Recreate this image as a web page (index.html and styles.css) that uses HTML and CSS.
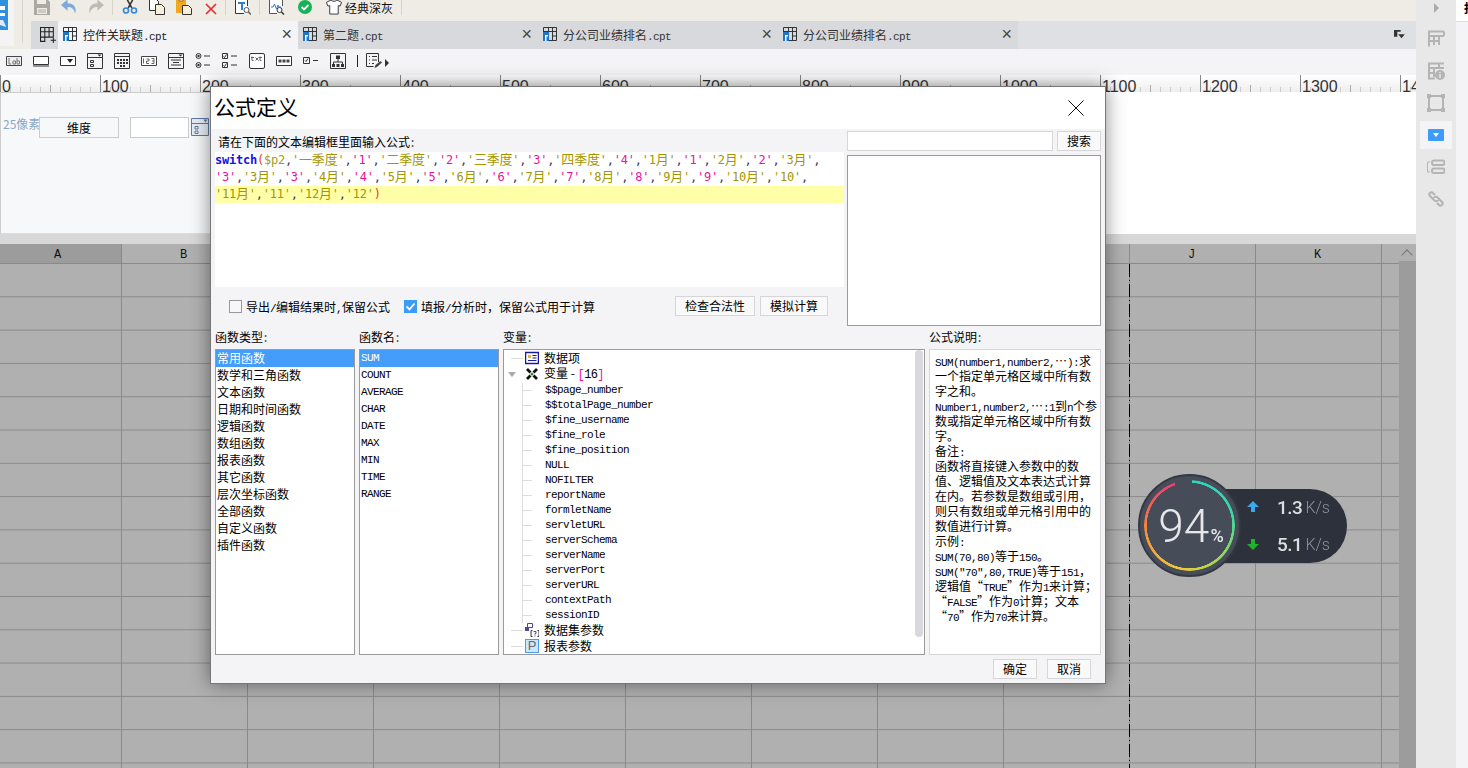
FILE: index.html
```html
<!DOCTYPE html>
<html lang="zh-CN">
  <head>
    <meta charset="UTF-8" />
    <title>公式定义</title>
    <link rel="stylesheet" href="styles.css">
  </head>
  <body>
    <svg class="sprite" xmlns="http://www.w3.org/2000/svg">
      <symbol id="i-file" viewBox="0 0 14 14"><path d="M.5.5h13v13H.5zM.5 4.500h13M5.500.5v13M9.500.5v13M9.500 9h4" fill="none" stroke="#333"/><path d="M0 5h6v9H0z" fill="#1b75c4"/><path d="M2 8h3v1.500H3.500V14H2z" fill="#fff"/></symbol>
      <symbol id="i-newtab" viewBox="0 0 15 15"><path d="M.5.5h12v9H.5zM.5 4.500h12M4.500.5v13H.5V9.500M8.500.5v9" fill="none" stroke="#222"/><path d="M10 12.500h5M12.500 10v5" stroke="#222"/></symbol>
      <symbol id="i-lab" viewBox="0 0 16 16"><path d="M.5 3.500h15v9H.5z" fill="#eee" stroke="#444"/><path d="M3 5v6h2M7 11V8h2.500v3zM11 5v6h2.500V8H11" fill="none" stroke="#777"/></symbol>
      <symbol id="i-input" viewBox="0 0 16 16"><path d="M.5 3.500h15v8H.5z" fill="#fff" stroke="#333"/><path d="M0 13h16" stroke="#333"/></symbol>
      <symbol id="i-select" viewBox="0 0 16 16"><path d="M.5 3.500h15v9H.5z" fill="#fff" stroke="#333"/><path d="M7 6h6l-3 4z" fill="#222"/></symbol>
      <symbol id="i-form" viewBox="0 0 16 16"><path d="M.5.5h15v15H.5zM.5 4.500h15M3.500 7.500h3v2h-3zM3.500 11.500h3v2h-3z" fill="none" stroke="#333"/><path d="M10.500 1.500h4l-2 2z" fill="#333"/></symbol>
      <symbol id="i-cal" viewBox="0 0 16 16"><path d="M.5.5h15v15H.5zM.5 3.500h15" fill="none" stroke="#333"/><path d="M3 6h2v2H3zM6 6h2v2H6zM9 6h2v2H9zM12 6h2v2h-2zM3 9h2v2H3zM6 9h2v2H6zM9 9h2v2H9zM12 9h2v2h-2zM6 12h2v2H6zM9 12h2v2H9z" fill="#333"/></symbol>
      <symbol id="i-num" viewBox="0 0 16 16"><path d="M.5 3.500h15v9H.5z" fill="#fff" stroke="#444"/><path d="M2.500 5.500v5M5.500 6h2.500v2H5.500v2.500H8M10.500 5.500H13v2.500h-2M13 8v2.500h-2.500" fill="none" stroke="#666"/></symbol>
      <symbol id="i-para" viewBox="0 0 16 16"><path d="M.5.5h15v15H.5zM.5 4.500h15M3 7h10M5 9.500h6M3 12h10" fill="none" stroke="#333"/><path d="M10.500 1.500h4l-2 2z" fill="#333"/></symbol>
      <symbol id="i-radios" viewBox="0 0 16 16"><g fill="none" stroke="#333"><circle cx="3.500" cy="3" r="2.500"/><circle cx="3.500" cy="12" r="2.500"/><path d="M9 3h6M9 12h6"/></g><circle cx="3.500" cy="3" r="1.200" fill="#333"/><circle cx="3.500" cy="12" r="1.200" fill="#333"/></symbol>
      <symbol id="i-checks" viewBox="0 0 16 16"><path d="M.5.500h5v5h-5zM.5 9.500h5v5h-5zM9 3h6M9 12h6M1.500 3.500l1 1 2-3M1.500 12.500l1 1 2-3" fill="none" stroke="#333"/></symbol>
      <symbol id="i-text" viewBox="0 0 16 16"><rect x=".5" y=".5" width="15" height="15" rx="1.500" fill="#fff" stroke="#333"/><path d="M3 3.500v4h1.500M2 4.500h3M6.500 4.500l3 3M9.500 4.500l-3 3M11 3.500v4h1.500M10 4.500h3" fill="none" stroke="#666"/></symbol>
      <symbol id="i-pass" viewBox="0 0 16 16"><path d="M.5 3.500h15v9H.5z" fill="#fff" stroke="#333"/><path d="M2.500 6.500h3v3h-3zM6.500 6.500h3v3h-3zM10.500 6.500h3v3h-3z" fill="#444"/></symbol>
      <symbol id="i-check" viewBox="0 0 16 16"><path d="M.5 4.500h6v6h-6zM10 7.500h5M2 7.500l1 1 2-3" fill="none" stroke="#333"/></symbol>
      <symbol id="i-tree" viewBox="0 0 16 16"><path d="M.5.5h15v15H.5zM8 6v3M3.500 11V9h9v2" fill="none" stroke="#333"/><path d="M6 2.500h4v3.500H6zM2 11h3v3H2zM6.500 11h3v3h-3zM11 11h3v3h-3z" fill="#333"/></symbol>
      <symbol id="i-listedit" viewBox="0 0 16 16"><path d="M12.500 9V.5H.5v13h7M3 3.500h1M6 3.500h5M3 7h1M6 7h5M3 10.500h1M6 10.500h2" fill="none" stroke="#333"/><path d="M8.500 15l1-3 5-4 1.500 1.500-5 4.500z" fill="#444"/></symbol>
      <symbol id="i-widget" viewBox="0 0 18 18"><path d="M.5.5h17v17H.5zM.5 5.500h17M4 8.500h3v2.500H4zM4 13h3v2.500H4z" fill="#e8edf5" stroke="#5f7aa8"/><path d="M12.500 1.500h4l-2 3z" fill="#5f7aa8"/></symbol>
      <symbol id="i-save" viewBox="0 0 16 16"><path d="M0 0h13l3 3v13H0z" fill="#aaa9a4"/><path d="M3-1h9v6H3z" fill="#efece5"/><path d="M3 9h10v6H3z" fill="#efece5"/><path d="M4 11h8M4 13h8" stroke="#aaa9a4"/></symbol>
      <symbol id="i-undo" viewBox="0 0 17 16"><path d="M7 0L0 6l7 6V8c4 0 7 2 8 7 2-6-1-11-8-11z" fill="#7da9dc"/></symbol>
      <symbol id="i-redo" viewBox="0 0 17 16"><path d="M10 0l7 6-7 6V8c-4 0-7 2-8 7C0 9 3 4 10 4z" fill="#bdbcb8"/></symbol>
      <symbol id="i-cut" viewBox="0 0 18 16"><path d="M7 9L12 0M11 9L6 0" stroke="#333" stroke-width="1.800" fill="none"/><circle cx="4.500" cy="12" r="2.800" fill="none" stroke="#3484d8" stroke-width="1.800"/><circle cx="13.500" cy="12" r="2.800" fill="none" stroke="#3484d8" stroke-width="1.800"/></symbol>
      <symbol id="i-copy" viewBox="0 0 16 16"><path d="M.5.5h7l2 2v9h-9z" fill="#fff" stroke="#333"/><path d="M6.500 5.500h6l3 3v7h-9z" fill="#f7efd8" stroke="#333"/></symbol>
      <symbol id="i-paste" viewBox="0 0 16 16"><path d="M0 0h10v14H0z" fill="#f0a820"/><path d="M3-1h4v3H3z" fill="#fff" stroke="#a06a10"/><path d="M6.500 6.500h6l3 3v6h-9z" fill="#f7efd8" stroke="#333"/></symbol>
      <symbol id="i-del" viewBox="0 0 12 12"><path d="M1 1l10 10M11 1L1 11" stroke="#e62e2e" stroke-width="1.700"/></symbol>
      <symbol id="i-tfind" viewBox="0 0 16 16"><path d="M9 14.500H.5V.5h12V7" fill="#fff" stroke="#333"/><path d="M3 3h7v2H8v6H6V5H3z" fill="#2e7fd0"/><circle cx="11.500" cy="11" r="2.500" fill="#fff" stroke="#555"/><path d="M13.500 13l2.500 2.500" stroke="#555" stroke-width="1.500"/></symbol>
      <symbol id="i-chart" viewBox="0 0 16 16"><path d="M8 14.500H.5V.5h13V7" fill="#fff" stroke="#555"/><path d="M2 8h2l1.500-3 2 5 1.500-4 1 2h2" fill="none" stroke="#3a7fc8"/><circle cx="10.500" cy="11" r="2.500" fill="#fff" stroke="#333"/><path d="M12.500 13l2.500 2.500" stroke="#333" stroke-width="1.500"/></symbol>
      <symbol id="i-ok" viewBox="0 0 14 14"><circle cx="7" cy="7" r="7" fill="#14b355"/><path d="M3.500 7l2.500 2.500 4.500-4.500" fill="none" stroke="#fff" stroke-width="1.800"/></symbol>
      <symbol id="i-shirt" viewBox="0 0 17 16"><path d="M5.500.5L.5 3l1.500 4 2-.5v9h9v-9l2 .5 1.500-4-5-2.500c-.5 2-5.500 2-6 0z" fill="#fff" stroke="#333"/></symbol>
      <symbol id="i-more" viewBox="0 0 14 12"><path d="M1 0h8v2H5v6H1z" fill="#333"/><path d="M6 5h8l-4 5z" fill="#333"/></symbol>
    </svg>

    <div class="app">
      <div class="main">
        <div class="top">
          <div class="logo-col">
            <div class="logo">
              <svg class="logo-mark" viewBox="0 0 8 30"><path d="M0 0h8v30H0z" fill="#2f8fe0"/><path d="M0 6h5v4H0zM0 13h5v3H0z" fill="#fff"/><path d="M0 20h3l2 4 1 3-3-1-3-1z" fill="#dfeaf5"/></svg>
            </div>
            <div class="logo-sep"></div>
          </div>
          <div class="top-right">
            <div class="toolbar">
              <svg class="ico"><use href="#i-save"/></svg>
              <svg class="ico"><use href="#i-undo"/></svg>
              <svg class="ico"><use href="#i-redo"/></svg>
              <span class="tb-sep"></span>
              <svg class="ico"><use href="#i-cut"/></svg>
              <svg class="ico"><use href="#i-copy"/></svg>
              <svg class="ico"><use href="#i-paste"/></svg>
              <svg class="ico ico-small"><use href="#i-del"/></svg>
              <span class="tb-sep"></span>
              <svg class="ico"><use href="#i-tfind"/></svg>
              <span class="tb-sep"></span>
              <svg class="ico"><use href="#i-chart"/></svg>
              <svg class="ico ico-ok"><use href="#i-ok"/></svg>
              <span class="theme"><svg class="ico"><use href="#i-shirt"/></svg>经典深灰</span>
              <span class="tb-sep"></span>
            </div>
            <div class="tabs">
              <div class="tab-new"><svg class="ico"><use href="#i-newtab"/></svg></div>
              <div class="tab active"><svg class="tab-ico"><use href="#i-file"/></svg><span class="tab-name">控件关联题<span class="lat">.cpt</span></span><span class="tab-x">×</span></div>
              <div class="tab"><svg class="tab-ico"><use href="#i-file"/></svg><span class="tab-name">第二题<span class="lat">.cpt</span></span><span class="tab-x">×</span></div>
              <div class="tab"><svg class="tab-ico"><use href="#i-file"/></svg><span class="tab-name">分公司业绩排名<span class="lat">.cpt</span></span><span class="tab-x">×</span></div>
              <div class="tab"><svg class="tab-ico"><use href="#i-file"/></svg><span class="tab-name">分公司业绩排名<span class="lat">.cpt</span></span><span class="tab-x">×</span></div>
              <svg class="tabs-more"><use href="#i-more"/></svg>
            </div>
          </div>
        </div>

        <div class="widgetbar">
          <svg class="ico"><use href="#i-lab"/></svg>
          <svg class="ico"><use href="#i-input"/></svg>
          <svg class="ico"><use href="#i-select"/></svg>
          <svg class="ico"><use href="#i-form"/></svg>
          <svg class="ico"><use href="#i-cal"/></svg>
          <svg class="ico"><use href="#i-num"/></svg>
          <svg class="ico"><use href="#i-para"/></svg>
          <svg class="ico"><use href="#i-radios"/></svg>
          <svg class="ico"><use href="#i-checks"/></svg>
          <svg class="ico"><use href="#i-text"/></svg>
          <svg class="ico"><use href="#i-pass"/></svg>
          <svg class="ico"><use href="#i-check"/></svg>
          <svg class="ico"><use href="#i-tree"/></svg>
          <span class="wb-sep"></span>
          <svg class="ico"><use href="#i-listedit"/></svg>
          <span class="wb-arrow"></span>
        </div>

        <div class="ruler">
          <span>0</span><span>100</span><span>200</span><span>300</span><span>400</span><span>500</span><span>600</span><span>700</span><span>800</span><span>900</span><span>1000</span><span>1100</span><span>1200</span><span>1300</span><span>1400</span>
        </div>

        <div class="canvas">
          <div class="param-panel">
            <span class="px-label">25像素</span>
            <span class="param-btn">维度</span>
            <span class="param-input"></span>
            <svg class="param-ico"><use href="#i-widget"/></svg>
          </div>
        </div>
        <div class="split"></div>

        <div class="sheet">
          <div class="grid">
            <div class="col-heads">
              <div class="col-head selected">A</div>
              <div class="col-head">B</div>
              <div class="col-head">C</div>
              <div class="col-head">D</div>
              <div class="col-head">E</div>
              <div class="col-head">F</div>
              <div class="col-head">G</div>
              <div class="col-head">H</div>
              <div class="col-head">I</div>
              <div class="col-head">J</div>
              <div class="col-head">K</div>
            </div>
            <div class="cells"><div class="page-break"></div></div>
          </div>
          <div class="vscroll"><div class="vscroll-up"></div></div>
        </div>
      </div>

      <div class="sidebar">
        <span class="side-arrow"></span>
        <svg class="side-ico" viewBox="0 0 18 18"><path d="M1 1.500h16M2 1.500v15M2 6h15M2 11h10M7 6v9M12 6v9M17 1.500V6" fill="none" stroke="#b4b4b4" stroke-width="2"/></svg>
        <svg class="side-ico" viewBox="0 0 18 18"><path d="M1 1.500h16M2 1.500v15h6M2 6h15M2 11h6M7 6v9M12 1.500V6" fill="none" stroke="#b4b4b4" stroke-width="2"/><circle cx="13" cy="13" r="5" fill="#b4b4b4"/><path d="M13 12v4M13 10v1" stroke="#e8e8e8" stroke-width="1.500"/></svg>
        <svg class="side-ico" viewBox="0 0 18 18"><path d="M2 2h14v14H2z" fill="none" stroke="#b4b4b4" stroke-width="2"/><path d="M0 0h4v4H0zM14 0h4v4h-4zM0 14h4v4H0zM14 14h4v4h-4z" fill="#b4b4b4"/></svg>
        <div class="side-active"><span class="side-blue"></span></div>
        <svg class="side-ico side-after" viewBox="0 0 18 18"><path d="M3 4H.5v10H3" fill="none" stroke="#b4b4b4"/><rect x="5" y="2.500" width="12.500" height="4.500" rx="2" fill="none" stroke="#b4b4b4" stroke-width="2"/><rect x="5" y="10.500" width="12.500" height="4.500" rx="2" fill="none" stroke="#b4b4b4" stroke-width="2"/></svg>
        <svg class="side-ico" viewBox="0 0 18 18"><path d="M8 5L6 3C4 1 1 4 3 6l4 4c2 2 4 1 4 0M10 13l2 2c2 2 5-1 3-3l-4-4C9 6 7 7 7 8" fill="none" stroke="#b4b4b4" stroke-width="2"/></svg>
      </div>

      <div class="strip">
        <div class="strip-top"><span class="strip-char">报</span></div>
        <div class="strip-body"></div>
      </div>
    </div>

    <div class="dialog">
      <div class="dialog-title">
        <h1>公式定义</h1>
        <svg class="dialog-close" viewBox="0 0 16 16"><path d="M.5.5l15 15M15.500.5l-15 15" stroke="#111" fill="none"/></svg>
      </div>
      <div class="dialog-body">
        <div class="upper">
          <div class="upper-left">
            <div class="hint">请在下面的文本编辑框里面输入公式<span class="colon">:</span></div>
            <div class="editor">
              <div class="code-line"><span class="c-fn">switch</span><span class="c-par">(</span><span class="c-var">$p2</span><span class="c-com">,</span><span class="c-str">'<b>一季度</b>'</span><span class="c-com">,</span><span class="c-num">'1'</span><span class="c-com">,</span><span class="c-str">'<b>二季度</b>'</span><span class="c-com">,</span><span class="c-num">'2'</span><span class="c-com">,</span><span class="c-str">'<b>三季度</b>'</span><span class="c-com">,</span><span class="c-num">'3'</span><span class="c-com">,</span><span class="c-str">'<b>四季度</b>'</span><span class="c-com">,</span><span class="c-num">'4'</span><span class="c-com">,</span><span class="c-str">'1<b>月</b>'</span><span class="c-com">,</span><span class="c-num">'1'</span><span class="c-com">,</span><span class="c-str">'2<b>月</b>'</span><span class="c-com">,</span><span class="c-num">'2'</span><span class="c-com">,</span><span class="c-str">'3<b>月</b>'</span><span class="c-com">,</span></div>
              <div class="code-line"><span class="c-num">'3'</span><span class="c-com">,</span><span class="c-str">'3<b>月</b>'</span><span class="c-com">,</span><span class="c-num">'3'</span><span class="c-com">,</span><span class="c-str">'4<b>月</b>'</span><span class="c-com">,</span><span class="c-num">'4'</span><span class="c-com">,</span><span class="c-str">'5<b>月</b>'</span><span class="c-com">,</span><span class="c-num">'5'</span><span class="c-com">,</span><span class="c-str">'6<b>月</b>'</span><span class="c-com">,</span><span class="c-num">'6'</span><span class="c-com">,</span><span class="c-str">'7<b>月</b>'</span><span class="c-com">,</span><span class="c-num">'7'</span><span class="c-com">,</span><span class="c-str">'8<b>月</b>'</span><span class="c-com">,</span><span class="c-num">'8'</span><span class="c-com">,</span><span class="c-str">'9<b>月</b>'</span><span class="c-com">,</span><span class="c-num">'9'</span><span class="c-com">,</span><span class="c-str">'10<b>月</b>'</span><span class="c-com">,</span><span class="c-str">'10'</span><span class="c-com">,</span></div>
              <div class="code-line current"><span class="c-str">'11<b>月</b>'</span><span class="c-com">,</span><span class="c-str">'11'</span><span class="c-com">,</span><span class="c-str">'12<b>月</b>'</span><span class="c-com">,</span><span class="c-str">'12'</span><span class="c-par">)</span></div>
            </div>
            <div class="options">
              <span class="check"></span>
              <span class="check-label">导出<span class="lat">/</span>编辑结果时<span class="lat">,</span>保留公式</span>
              <span class="check checked"><svg viewBox="0 0 13 13"><path d="M2.500 6.500l3 3 5-6" fill="none" stroke="#fff" stroke-width="1.800"/></svg></span>
              <span class="check-label">填报<span class="lat">/</span>分析时，保留公式用于计算</span>
              <button class="btn btn-check">检查合法性</button>
              <button class="btn btn-sim">模拟计算</button>
            </div>
          </div>
          <div class="upper-right">
            <div class="search-row">
              <span class="search-input"></span>
              <button class="btn btn-search">搜索</button>
            </div>
            <div class="search-result"></div>
          </div>
        </div>

        <div class="lower">
          <div class="col">
            <div class="col-title">函数类型<span class="colon">:</span></div>
            <ul class="list">
              <li class="on">常用函数</li>
              <li>数学和三角函数</li>
              <li>文本函数</li>
              <li>日期和时间函数</li>
              <li>逻辑函数</li>
              <li>数组函数</li>
              <li>报表函数</li>
              <li>其它函数</li>
              <li>层次坐标函数</li>
              <li>全部函数</li>
              <li>自定义函数</li>
              <li>插件函数</li>
            </ul>
          </div>
          <div class="col">
            <div class="col-title">函数名<span class="colon">:</span></div>
            <ul class="list list-fn">
              <li class="on">SUM</li>
              <li>COUNT</li>
              <li>AVERAGE</li>
              <li>CHAR</li>
              <li>DATE</li>
              <li>MAX</li>
              <li>MIN</li>
              <li>TIME</li>
              <li>RANGE</li>
            </ul>
          </div>
          <div class="col">
            <div class="col-title">变量<span class="colon">:</span></div>
            <div class="tree">
              <div class="tree-top has-line">
                <svg class="tree-ico" viewBox="0 0 14 14"><path d="M.5 1.500h13v11H.5z" fill="#fff" stroke="#1a1a9c" stroke-width="1.500"/><path d="M3 4h3v3H3z" fill="#e8b820"/><path d="M7.500 4.500h4M7.500 7h4M3 9.500h8.500" stroke="#1a1a9c"/></svg>
                <span>数据项</span>
              </div>
              <div class="tree-top">
                <span class="tree-toggle"></span>
                <svg class="tree-ico" viewBox="0 0 14 14"><path d="M2 2l3.500 3.500M12 2L8.500 5.500M2 12l3.500-3.500M12 12L8.500 8.500" stroke="#111" stroke-width="2.800"/><circle cx="7" cy="7" r="1.500" fill="#2f8f2f"/></svg>
                <span>变量 - <span class="lat tree-count"><i>[</i>16<i>]</i></span></span>
              </div>
              <div class="tree-kid">$$page_number</div>
              <div class="tree-kid">$$totalPage_number</div>
              <div class="tree-kid">$fine_username</div>
              <div class="tree-kid">$fine_role</div>
              <div class="tree-kid">$fine_position</div>
              <div class="tree-kid">NULL</div>
              <div class="tree-kid">NOFILTER</div>
              <div class="tree-kid">reportName</div>
              <div class="tree-kid">formletName</div>
              <div class="tree-kid">servletURL</div>
              <div class="tree-kid">serverSchema</div>
              <div class="tree-kid">serverName</div>
              <div class="tree-kid">serverPort</div>
              <div class="tree-kid">serverURL</div>
              <div class="tree-kid">contextPath</div>
              <div class="tree-kid">sessionID</div>
              <div class="tree-top has-line">
                <svg class="tree-ico" viewBox="0 0 14 14"><path d="M2.500 .5h5v4h-5z" fill="#fff" stroke="#4a4a98"/><path d="M0 4h4v4H0z" fill="#4a4a98"/><path d="M7.500 7.500H6v6h1.500M12.500 7.500H14v6h-1.500" fill="none" stroke="#333"/><path d="M8.500 8.500h2.500v2H10v1.200M10 12.500v1" fill="none" stroke="#4a4a98"/></svg>
                <span>数据集参数</span>
              </div>
              <div class="tree-top has-line">
                <span class="tree-p">P</span>
                <span>报表参数</span>
              </div>
              <div class="tree-thumb"></div>
            </div>
          </div>
          <div class="col">
            <div class="col-title">公式说明<span class="colon">:</span></div>
            <div class="desc">
              <div><span class="lat">SUM(number1,number2,</span>…<span class="lat">):</span>求</div>
              <div>一个指定单元格区域中所有数</div>
              <div>字之和。</div>
              <div><span class="lat">Number1,number2,</span>…<span class="lat">:1</span>到<span class="lat">n</span>个参</div>
              <div>数或指定单元格区域中所有数</div>
              <div>字。</div>
              <div>备注<span class="lat">:</span></div>
              <div>函数将直接键入参数中的数</div>
              <div>值、逻辑值及文本表达式计算</div>
              <div>在内。若参数是数组或引用，</div>
              <div>则只有数组或单元格引用中的</div>
              <div>数值进行计算。</div>
              <div>示例<span class="lat">:</span></div>
              <div><span class="lat">SUM(70,80)</span>等于<span class="lat">150</span>。</div>
              <div><span class="lat">SUM("70",80,TRUE)</span>等于<span class="lat">151</span>，</div>
              <div>逻辑值“<span class="lat">TRUE</span>”作为<span class="lat">1</span>来计算；</div>
              <div>“<span class="lat">FALSE</span>”作为<span class="lat">0</span>计算；文本</div>
              <div>“<span class="lat">70</span>”作为<span class="lat">70</span>来计算。</div>
            </div>
          </div>
        </div>

        <div class="dialog-foot">
          <button class="btn btn-foot">确定</button>
          <button class="btn btn-foot">取消</button>
        </div>
      </div>
    </div>

    <div class="netmeter">
      <div class="net-pill">
        <div class="net-row"><svg class="net-arrow" viewBox="0 0 12 12"><path d="M6 0l6 6H8v5H4V6H0z" fill="#3aa8ea"/></svg><span class="net-val">1.3</span><span class="net-unit">K/s</span></div>
        <div class="net-row"><svg class="net-arrow" viewBox="0 0 12 12"><path d="M6 12L0 6h4V1h4v5h4z" fill="#1fb32b"/></svg><span class="net-val">5.1</span><span class="net-unit">K/s</span></div>
      </div>
      <div class="net-circle">
        <div class="net-ring"></div>
        <span class="net-pct">94</span><span class="net-sign">%</span>
      </div>
    </div>
  </body>
</html>
```

FILE: styles.css
```css
html,
body {
  margin: 0;
  width: 1468px;
  height: 768px;
  overflow: hidden;
}

body {
  position: relative;
  font-family: "Noto Sans CJK SC", "Liberation Sans", sans-serif;
  font-size: 12px;
  color: #000;
}

ul {
  list-style: none;
  margin: 0;
  padding: 0;
}

.sprite {
  display: none;
}

.lat {
  font-family: "Liberation Mono", monospace;
  font-size: 11px;
  letter-spacing: -0.6px;
}

.colon {
  font-family: "Liberation Mono", monospace;
  color: #555;
  margin-left: -1px;
}

.app {
  display: flex;
  height: 768px;
}

.main {
  width: 1416px;
  display: flex;
  flex-direction: column;
  overflow: hidden;
}

/* top bars */

.top {
  display: flex;
  height: 49px;
}

.logo-col {
  width: 31px;
  display: flex;
  background-color: #efece5;
}

.logo {
  width: 14px;
  height: 46px;
  background-color: #f4f4f4;
}

.logo-mark {
  display: block;
  width: 8px;
  height: 30px;
}

.logo-sep {
  width: 1px;
  height: 43px;
  margin-left: 8px;
  background-color: #d8d5cd;
}

.top-right {
  flex: 1;
  display: flex;
  flex-direction: column;
  min-width: 0;
}

.toolbar {
  height: 21px;
  display: flex;
  align-items: flex-start;
  gap: 11px;
  padding-left: 3px;
  background-color: #efece5;
}

.ico {
  width: 16px;
  height: 16px;
  flex: none;
}

.toolbar .ico {
  margin-top: -1px;
}

.toolbar .ico-small {
  width: 12px;
  height: 12px;
  margin-top: 3px;
  margin-left: 2px;
}

.toolbar .ico-ok {
  width: 14px;
  height: 14px;
  margin-top: 0;
  margin-left: 2px;
}

.tb-sep {
  width: 1px;
  height: 15px;
  background-color: #d8d5cd;
  margin: 0 -2px 0 -3px;
}

.theme {
  display: flex;
  align-items: flex-start;
  gap: 3px;
  margin-left: 3px;
  line-height: 16px;
  color: #111;
}

.tabs {
  position: relative;
  height: 28px;
  display: flex;
  background-color: #dfe0e3;
}

.tab-new {
  width: 27px;
  box-sizing: border-box;
  display: flex;
  align-items: center;
  padding-left: 9px;
  background-color: #d8d9dd;
}

.tab {
  width: 240px;
  display: flex;
  align-items: center;
  padding: 0 6px 2px 5px;
  box-sizing: border-box;
  background-color: #d8d9dd;
  color: #333;
}

.tab.active {
  background-color: #f4f4f6;
  color: #222;
}

.tab-ico {
  width: 14px;
  height: 14px;
  margin-right: 6px;
  flex: none;
}

.tab-name {
  flex: 1;
  white-space: nowrap;
}

.tab-x {
  font-family: "Liberation Sans", sans-serif;
  font-size: 18px;
  line-height: 18px;
  color: #444;
}

.tabs-more {
  position: absolute;
  left: 1362px;
  top: 9px;
  width: 12px;
  height: 10px;
}

.widgetbar {
  height: 26px;
  display: flex;
  align-items: center;
  gap: 11px;
  padding-left: 6px;
  padding-bottom: 3px;
  box-sizing: border-box;
  background-color: #f4f4f6;
}

.wb-sep {
  width: 1px;
  height: 12px;
  background-color: #222;
}

.wb-sep + .ico {
  margin-left: -3px;
}

.wb-arrow {
  width: 0;
  height: 0;
  margin-left: -8px;
  margin-top: 5px;
  border-left: 4px solid #333;
  border-top: 4px solid transparent;
  border-bottom: 4px solid transparent;
}

.ruler {
  height: 17px;
  display: flex;
  overflow: hidden;
  white-space: nowrap;
  background:
    repeating-linear-gradient(90deg, #888 0 1px, transparent 1px 100px) 0 0 / 100% 17px no-repeat,
    repeating-linear-gradient(90deg, #aaa 0 1px, transparent 1px 50px) 0 10px / 100% 7px no-repeat,
    repeating-linear-gradient(90deg, #ccc 0 1px, transparent 1px 10px) 0 12px / 100% 5px no-repeat,
    linear-gradient(#fff, #eee);
}

.ruler span {
  flex: none;
  width: 100px;
  padding-left: 2px;
  box-sizing: border-box;
  font-family: "Liberation Sans", sans-serif;
  font-size: 16px;
  line-height: 24px;
  color: #333;
}

.canvas {
  height: 142px;
  background-color: #fff;
}

.param-panel {
  width: 700px;
  height: 142px;
  box-sizing: border-box;
  display: flex;
  align-items: flex-start;
  padding-top: 24px;
  padding-left: 2px;
  background-color: #f7f8fa;
  border-top: 1px solid #ccc;
  border-left: 1px solid #ccc;
  border-bottom: 1px solid #ddd;
}

.px-label {
  width: 36px;
  margin-top: -1px;
  line-height: 16px;
  color: #8aa8c4;
  white-space: nowrap;
}

.param-btn {
  width: 80px;
  height: 21px;
  box-sizing: border-box;
  border: 1px solid #ccc;
  text-align: center;
  line-height: 19px;
  background-color: #f7f8fa;
}

.param-input {
  width: 59px;
  height: 21px;
  box-sizing: border-box;
  margin-left: 11px;
  border: 1px solid #ccc;
  background-color: #fff;
}

.param-ico {
  width: 18px;
  height: 18px;
  margin: 1px 0 0 2px;
}

.split {
  height: 10px;
  background-color: #d8d8d8;
}

/* sheet behind the dialog */

.sheet {
  flex: 1;
  display: flex;
  min-height: 0;
}

.grid {
  flex: 1;
  display: flex;
  flex-direction: column;
  background-color: #b0b0b0;
}

.col-heads {
  height: 20px;
  display: flex;
  box-sizing: border-box;
  border-bottom: 1px solid #8a8a8a;
}

.col-head {
  flex: none;
  width: 126px;
  padding-right: 2px;
  box-sizing: border-box;
  border-right: 1px solid #8a8a8a;
  text-align: center;
  font-family: "Liberation Mono", monospace;
  line-height: 22px;
  color: #111;
}

.col-head:first-child {
  width: 122px;
  padding-right: 6px;
}

.col-head.selected {
  background-color: #9c9c9c;
}

.cells {
  position: relative;
  flex: 1;
  background:
    linear-gradient(90deg, transparent 125px, #8a8a8a 125px) -4px 0 / 126px 100%,
    linear-gradient(transparent 32.3px, #8a8a8a 32.3px) 0 0 / 100% 33.3px;
}

.page-break {
  position: absolute;
  left: 1129px;
  top: 0;
  bottom: 0;
  width: 1px;
  background: repeating-linear-gradient(180deg, #000 0 13px, transparent 13px 16px, #000 16px 17px, transparent 17px 20px);
}

.vscroll {
  width: 17px;
  background-color: #9c9c9c;
}

.vscroll-up {
  height: 17px;
  background-color: #b0b0b0;
  position: relative;
}

.vscroll-up::after {
  content: "";
  position: absolute;
  left: 4px;
  top: 7px;
  width: 7px;
  height: 7px;
  border-left: 1px solid #777;
  border-top: 1px solid #777;
  transform: rotate(45deg);
}

/* right side */

.sidebar {
  width: 40px;
  display: flex;
  flex-direction: column;
  align-items: center;
  background-color: #e8e8e8;
}

.side-arrow {
  width: 0;
  height: 0;
  margin-top: 3px;
  margin-bottom: 17px;
  border-left: 5px solid #aaa;
  border-top: 5px solid transparent;
  border-bottom: 5px solid transparent;
}

.side-ico {
  width: 18px;
  height: 18px;
  margin-bottom: 14px;
  flex: none;
}

.side-active {
  width: 32px;
  height: 28px;
  margin-top: -5px;
  display: flex;
  align-items: center;
  justify-content: center;
  background-color: #f4f4f6;
}

.side-blue {
  position: relative;
  width: 16px;
  height: 12px;
  border-radius: 1px;
  background-color: #3f9bfb;
}

.side-blue::after {
  content: "";
  position: absolute;
  left: 5px;
  top: 4px;
  border-top: 4px solid #fff;
  border-left: 3px solid transparent;
  border-right: 3px solid transparent;
}

.side-after {
  margin-top: 9px;
}

.strip {
  flex: 1;
  display: flex;
  flex-direction: column;
  overflow: hidden;
}

.strip-top {
  height: 22px;
  box-sizing: border-box;
  padding-left: 8px;
  border-bottom: 1px solid #ddd;
  background-color: #fff;
  white-space: nowrap;
  line-height: 16px;
  font-weight: 700;
}

.strip-body {
  flex: 1;
  background-color: #f4f4f6;
}

/* dialog */

.dialog {
  position: absolute;
  left: 210px;
  top: 86px;
  width: 896px;
  height: 598px;
  box-sizing: border-box;
  display: flex;
  flex-direction: column;
  border: 1px solid #777;
  background-color: #f4f4f6;
  box-shadow: 0 0 18px rgba(0, 0, 0, 0.45);
}

.dialog-title {
  height: 42px;
  flex: none;
  display: flex;
  align-items: center;
  justify-content: space-between;
  padding: 0 21px 0 3px;
  background-color: #fff;
}

.dialog-title h1 {
  margin: -4px 0 0;
  font-size: 21px;
  font-weight: 400;
  line-height: 42px;
}

.dialog-close {
  width: 16px;
  height: 16px;
}

.dialog-body {
  flex: 1;
  display: flex;
  flex-direction: column;
  padding: 0 4px;
}

.upper {
  height: 197px;
  display: flex;
  gap: 3px;
}

.upper-left {
  width: 629px;
  display: flex;
  flex-direction: column;
}

.hint {
  height: 23px;
  padding-left: 3px;
  padding-top: 3px;
  box-sizing: border-box;
  line-height: 20px;
}

.editor {
  height: 135px;
  background-color: #fff;
  font-family: "DejaVu Sans Mono", "Noto Sans CJK SC", monospace;
  font-size: 12px;
  letter-spacing: -0.22px;
  white-space: nowrap;
}

.code-line {
  height: 17px;
  line-height: 16px;
}

.code-line.current {
  background-color: #ffffa8;
}

.code-line b {
  font-size: 13px;
  font-weight: 400;
}

.c-fn {
  color: #1414e6;
  font-weight: 700;
}

.c-par {
  color: #e83a2a;
}

.c-var {
  color: #a89a20;
}

.c-com {
  color: #3a3a6a;
}

.c-str {
  color: #a39600;
}

.c-num {
  color: #e6139e;
}

.options {
  flex: 1;
  display: flex;
  align-items: center;
  padding-left: 14px;
  padding-bottom: 1px;
}

.check {
  width: 13px;
  height: 13px;
  box-sizing: border-box;
  flex: none;
  margin-right: 4px;
  border: 1px solid #999;
  background-color: #f7f7f8;
}

.check.checked {
  border: 0;
  background-color: #3c9bf5;
}

.check svg {
  display: block;
}

.check-label {
  margin-right: 14px;
  white-space: nowrap;
}

.btn {
  height: 20px;
  padding: 0;
  box-sizing: border-box;
  border: 1px solid #d6d6d8;
  background-color: #f9f9fa;
  font-family: inherit;
  font-size: 12px;
  line-height: 18px;
  color: #000;
}

.btn-check {
  width: 80px;
  margin-left: auto;
  margin-bottom: 1px;
}

.btn-sim {
  width: 68px;
  margin-left: 5px;
  margin-right: 16px;
  margin-bottom: 1px;
}

.upper-right {
  flex: 1;
  display: flex;
  flex-direction: column;
  padding-top: 2px;
}

.search-row {
  display: flex;
  gap: 4px;
  height: 20px;
  margin-bottom: 4px;
}

.search-input {
  width: 206px;
  box-sizing: border-box;
  border: 1px solid #d6d6d8;
  background-color: #fff;
}

.btn-search {
  width: 44px;
}

.search-result {
  flex: 1;
  border: 1px solid #9a9a9a;
  background-color: #fff;
}

.lower {
  display: grid;
  grid-template-columns: 140px 140px 422px 172px;
  gap: 4px;
  height: 329px;
}

.col {
  display: flex;
  flex-direction: column;
  min-width: 0;
}

.col-title {
  height: 23px;
  flex: none;
  line-height: 22px;
}

.list,
.tree,
.desc {
  height: 306px;
  box-sizing: border-box;
  border: 1px solid #9a9a9a;
  background-color: #fff;
}

.list li {
  height: 17px;
  padding-left: 1px;
  line-height: 16px;
  white-space: nowrap;
}

.list li.on {
  background-color: #459dfb;
  color: #fff;
}

.list-fn li {
  font-family: "Liberation Mono", monospace;
  font-size: 11px;
  letter-spacing: -0.6px;
  line-height: 17px;
}

.tree {
  position: relative;
  overflow: hidden;
  padding-top: 1px;
}

.tree-top {
  position: relative;
  height: 16px;
  box-sizing: border-box;
  display: flex;
  align-items: center;
  padding-left: 21px;
  padding-bottom: 2px;
  line-height: 14px;
  white-space: nowrap;
}

.tree-top.has-line::before {
  content: "";
  position: absolute;
  left: 7px;
  top: 7px;
  width: 12px;
  border-top: 1px solid #ddd;
}

.tree-toggle {
  position: absolute;
  left: 4px;
  top: 5px;
  border-top: 5px solid #aaa;
  border-left: 4px solid transparent;
  border-right: 4px solid transparent;
}

.tree-ico {
  width: 14px;
  height: 14px;
  margin-right: 5px;
  flex: none;
}

.tree-p {
  width: 14px;
  height: 14px;
  margin-right: 5px;
  box-sizing: border-box;
  border: 1px solid #4a9cf0;
  background-color: #cfe6fb;
  font-family: "Liberation Sans", sans-serif;
  font-size: 13px;
  line-height: 12px;
  text-align: center;
  color: #667;
}

.tree-count {
  font-size: 12px;
}

.tree-count i {
  font-style: normal;
  color: #e6139e;
}

.tree-kid {
  position: relative;
  height: 15px;
  padding-left: 41px;
  font-family: "Liberation Mono", monospace;
  font-size: 11px;
  letter-spacing: -0.6px;
  line-height: 15px;
  white-space: nowrap;
}

.tree-kid::before {
  content: "";
  position: absolute;
  left: 18px;
  top: 0;
  height: 15px;
  width: 10px;
  border-left: 1px solid #ddd;
  box-sizing: border-box;
  background: linear-gradient(#ddd, #ddd) 0 7px / 100% 1px no-repeat;
}

.tree-thumb {
  position: absolute;
  left: 411px;
  top: 0;
  width: 8px;
  height: 287px;
  border-radius: 4px;
  background-color: #d9d9dd;
}

.desc {
  padding: 3px 0 0 5px;
  border-color: #d6d6d8;
  white-space: nowrap;
  line-height: 15px;
}

.desc div {
  height: 15px;
}

.dialog-foot {
  flex: 1;
  display: flex;
  justify-content: flex-end;
  gap: 10px;
  padding-top: 4px;
  padding-right: 10px;
}

.btn-foot {
  width: 44px;
}

/* floating network meter */

.netmeter {
  position: absolute;
  left: 1138px;
  top: 474px;
  width: 209px;
  height: 103px;
  display: flex;
  align-items: center;
  filter: blur(0.4px);
}

.net-pill {
  width: 158px;
  height: 74px;
  margin-left: 51px;
  box-sizing: border-box;
  padding-left: 58px;
  display: flex;
  flex-direction: column;
  justify-content: center;
  border-radius: 0 37px 37px 0;
  background-color: #2c313b;
}

.net-row {
  height: 37px;
  display: flex;
  align-items: center;
  font-family: Roboto, sans-serif;
}

.net-arrow {
  width: 12px;
  height: 12px;
  margin-right: 18px;
}

.net-val {
  font-size: 19px;
  font-weight: 500;
  color: #dcdee2;
  letter-spacing: -0.5px;
}

.net-unit {
  margin-left: 3px;
  font-size: 16px;
  font-weight: 300;
  color: #8d929c;
}

.net-circle {
  position: absolute;
  left: 0;
  top: 0;
  width: 103px;
  height: 103px;
  box-sizing: border-box;
  display: flex;
  align-items: baseline;
  justify-content: center;
  padding-top: 22px;
  padding-left: 3px;
  border-radius: 50%;
  border: 2px solid #343843;
  background-color: #474c59;
  font-family: Roboto, sans-serif;
  color: #e6e7ea;
}

.net-ring {
  position: absolute;
  inset: 4px;
  border-radius: 50%;
  background: conic-gradient(from 3deg, #2ed6c2 0deg, #37d8a8 70deg, #9ddb55 135deg, #f2c83c 190deg, #f59a3a 250deg, #ef5a5a 300deg, #ee3a78 338deg, transparent 338deg);
  -webkit-mask: radial-gradient(closest-side, transparent calc(100% - 3px), #000 calc(100% - 2.5px));
  mask: radial-gradient(closest-side, transparent calc(100% - 3px), #000 calc(100% - 2.5px));
}

.net-pct {
  font-size: 46px;
  font-weight: 300;
  line-height: 56px;
}

.net-sign {
  font-size: 18px;
  font-weight: 500;
  margin-left: 1px;
}
```
